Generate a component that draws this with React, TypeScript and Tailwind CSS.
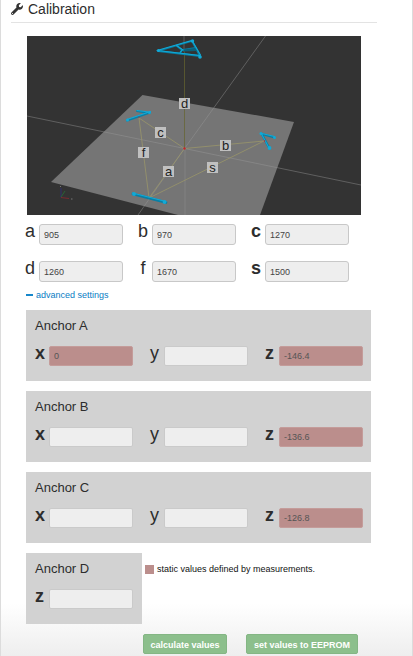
import React from "react";
import { FaWrench } from "react-icons/fa";

const measurements = [
  { name: "a", value: "905", weight: "font-normal" },
  { name: "b", value: "970", weight: "font-normal" },
  { name: "c", value: "1270", weight: "font-bold" },
  { name: "d", value: "1260", weight: "font-normal" },
  { name: "f", value: "1670", weight: "font-normal" },
  { name: "s", value: "1500", weight: "font-bold" },
];

const anchors = [
  { name: "A", x: "0", z: "-146.4" },
  { name: "B", x: "", z: "-136.6" },
  { name: "C", x: "", z: "-126.8" },
];

const tags = [
  { t: "d", x: 184, y: 103 },
  { t: "c", x: 160, y: 132 },
  { t: "f", x: 143, y: 152 },
  { t: "a", x: 168, y: 171 },
  { t: "b", x: 225, y: 145 },
  { t: "s", x: 212, y: 167 },
];

function Scene() {
  return (
    <svg
      viewBox="27 36 334 179"
      className="block w-full"
      role="img"
      aria-label="Printer geometry"
    >
      <rect x="27" y="36" width="334" height="179" fill="#333333" />
      <polygon points="142.5,95 294,122 260,215 178,215 51,182" fill="#757575" />
      <g fill="none" strokeWidth="0.8">
        <path d="M27 116 L184.5 148.5 L361 185" stroke="#999" opacity="0.55" />
        <path d="M265.5 36 L184.5 148.5 L138 215" stroke="#999" opacity="0.55" />
        <path d="M185 148 V215" stroke="#999" opacity="0.5" />
        <path d="M184 36 V52" stroke="#888" opacity="0.6" />
        <path d="M184.5 52 V148" stroke="#66642f" opacity="0.9" />
        <path
          d="M184.5 148.5 L139 118 L149 198 L184.5 148.5 L264 141 L149 198"
          stroke="#99966a"
        />
      </g>
      <g fill="none" stroke="#087fa5" strokeLinecap="round" strokeLinejoin="round">
        <path d="M158 51 L192 41 L200 56 Z" strokeWidth="1.8" />
        <path d="M177 46 L182 50 L180 53 M183 50 L196 48" strokeWidth="1.8" />
        <path d="M127 120.5 L150 112.5 M137 111 L149 113" strokeWidth="2" />
        <path d="M261.5 133.5 L269.5 148.5 M262 134 L274.5 137.5" strokeWidth="2.2" />
        <path d="M133 194 L166 202.5" strokeWidth="2.8" />
      </g>
      <path d="M184 49.5 L195 48 L197 51 L184 51.5 Z" fill="#0b5f78" />
      <g fill="none" stroke="#12a9d6" strokeLinecap="round" strokeWidth="1.1">
        <path d="M157 50.5 L192 40.5 L200.5 55 M157 50.5 L200 55.5" />
        <path d="M176.5 45.5 L182.5 49.5 L180.5 52" />
        <path d="M127 119.5 L150.5 111.5 M137 110.5 L149 112" />
        <path d="M261 133 L269 148 M262 133.5 L274.5 136.5" />
        <path d="M132.5 193 L166 201.5" />
      </g>
      <g fill="#12a9d6">
        <circle cx="158.5" cy="50.5" r="1.5" />
        <circle cx="192.5" cy="41" r="1.7" />
        <circle cx="200" cy="57" r="1.8" />
        <circle cx="134" cy="194" r="1.9" />
        <circle cx="164.5" cy="202" r="1.9" />
        <circle cx="127.5" cy="120" r="1.5" />
        <circle cx="149.5" cy="112.5" r="1.5" />
        <circle cx="261" cy="133.5" r="1.5" />
        <circle cx="269.5" cy="148" r="1.9" />
        <circle cx="274.5" cy="137.5" r="1.5" />
      </g>
      <g fill="#c3262c">
        <circle cx="184.5" cy="148.5" r="1.2" />
        <circle cx="264.5" cy="141" r="0.8" />
        <circle cx="139" cy="117" r="0.6" />
      </g>
      <g fill="none" strokeWidth="1">
        <path d="M61 197.5 V188" stroke="#30306f" />
        <path d="M61 197 L65 191" stroke="#286538" />
        <path d="M61 197.5 L69 198.5" stroke="#7a2a30" />
        <path d="M71 199 h1.5 M60 186.5 h1" stroke="#777" />
      </g>
      {tags.map((tag) => (
        <g key={tag.t}>
          <rect x={tag.x - 5} y={tag.y - 5} width="11" height="11" fill="#c0c0c0" />
          <text
            x={tag.x + 0.5}
            y={tag.y + 5}
            textAnchor="middle"
            fill="#222"
            className="text-[13px]"
          >
            {tag.t}
          </text>
        </g>
      ))}
    </svg>
  );
}

function AnchorField({
  id,
  axis,
  value,
  fixed = false,
}: {
  id: string;
  axis: string;
  value: string;
  fixed?: boolean;
}) {
  return (
    <div className="flex items-start gap-1 pl-[9px]">
      <label
        htmlFor={id}
        className={`w-[10px] text-[18px] leading-[18px] ${axis === "y" ? "font-normal" : "font-bold"}`}
      >
        {axis}
      </label>
      <input
        id={id}
        defaultValue={value}
        readOnly={fixed}
        className={`mt-[2px] h-5 w-[84px] rounded-[2px] border px-1 text-[9px] text-[#555] ${
          fixed ? "border-[#c49c9a] bg-[#bb8e8c]" : "border-[#cacaca] bg-[#eeeeee]"
        }`}
      />
    </div>
  );
}

export default function App() {
  return (
    <main className="border-x border-[#dcdcdc] bg-linear-to-b from-white from-92% to-[#eeeeee] pb-[2px] pl-[10px] font-['Liberation_Sans',Arial,sans-serif] text-[#2d2d2d]">
      <h1 className="mr-[35px] flex h-[23px] items-center gap-[5px] border-b border-[#e3e3e3] pb-[4px] text-[14px] leading-[18px]">
        <FaWrench className="size-3 text-[#333]" />
        Calibration
      </h1>

      <div className="mt-[13px] mr-[51px] ml-4">
        <Scene />
      </div>

      <div className="mt-[9px] mr-[48px] ml-[14px] grid grid-cols-3 gap-y-4">
        {measurements.map((m) => (
          <div key={m.name} className="flex items-start gap-1">
            <label
              htmlFor={`m-${m.name}`}
              className={`w-[10px] text-center text-[18px] leading-[14px] ${m.weight}`}
            >
              {m.name}
            </label>
            <input
              id={`m-${m.name}`}
              defaultValue={m.value}
              className="h-[21px] w-[84px] rounded-[3px] border border-[#c8c8c8] bg-[#eeeeee] px-1 text-[9px] text-[#444]"
            />
          </div>
        ))}
      </div>

      <button
        type="button"
        className="mt-[6px] ml-[15px] flex items-center gap-[3px] text-[9px] leading-[14px] text-[#0a7dc4]"
      >
        <span className="h-[2px] w-[7px] bg-[#1687cb]" />
        advanced settings
      </button>

      <div className="mt-2 mr-[41px] ml-[15px] flex flex-col gap-[10px]">
        {anchors.map((a) => (
          <section key={a.name} className="h-[71px] bg-[#d2d2d2] pt-2">
            <h2 className="pl-[9px] text-[13px] leading-4">Anchor {a.name}</h2>
            <div className="mt-[10px] grid grid-cols-3">
              <AnchorField id={`${a.name}-x`} axis="x" value={a.x} fixed={a.x !== ""} />
              <AnchorField id={`${a.name}-y`} axis="y" value="" />
              <AnchorField id={`${a.name}-z`} axis="z" value={a.z} fixed />
            </div>
          </section>
        ))}
        <div className="flex gap-[3px]">
          <section className="h-[71px] w-[116px] bg-[#d2d2d2] pt-2">
            <h2 className="pl-[9px] text-[13px] leading-4">Anchor D</h2>
            <div className="mt-[10px]">
              <AnchorField id="D-z" axis="z" value="" />
            </div>
          </section>
          <p className="mt-2 flex h-4 items-center gap-[3px] text-[9px] leading-4 text-[#111]">
            <span className="size-[9px] bg-[#bb8e8c]" />
            static values defined by measurements.
          </p>
        </div>
      </div>

      <div className="mt-[10px] ml-[132px] flex gap-[19px]">
        <button
          type="button"
          className="h-5 w-[84px] rounded-[2px] border border-[#84b684] bg-[#8cbf8c] pt-[2px] text-[9px] leading-4 font-bold text-white"
        >
          calculate values
        </button>
        <button
          type="button"
          className="h-5 w-[112px] rounded-[2px] border border-[#84b684] bg-[#8cbf8c] pt-[2px] text-[9px] leading-4 font-bold text-white"
        >
          set values to EEPROM
        </button>
      </div>
    </main>
  );
}
